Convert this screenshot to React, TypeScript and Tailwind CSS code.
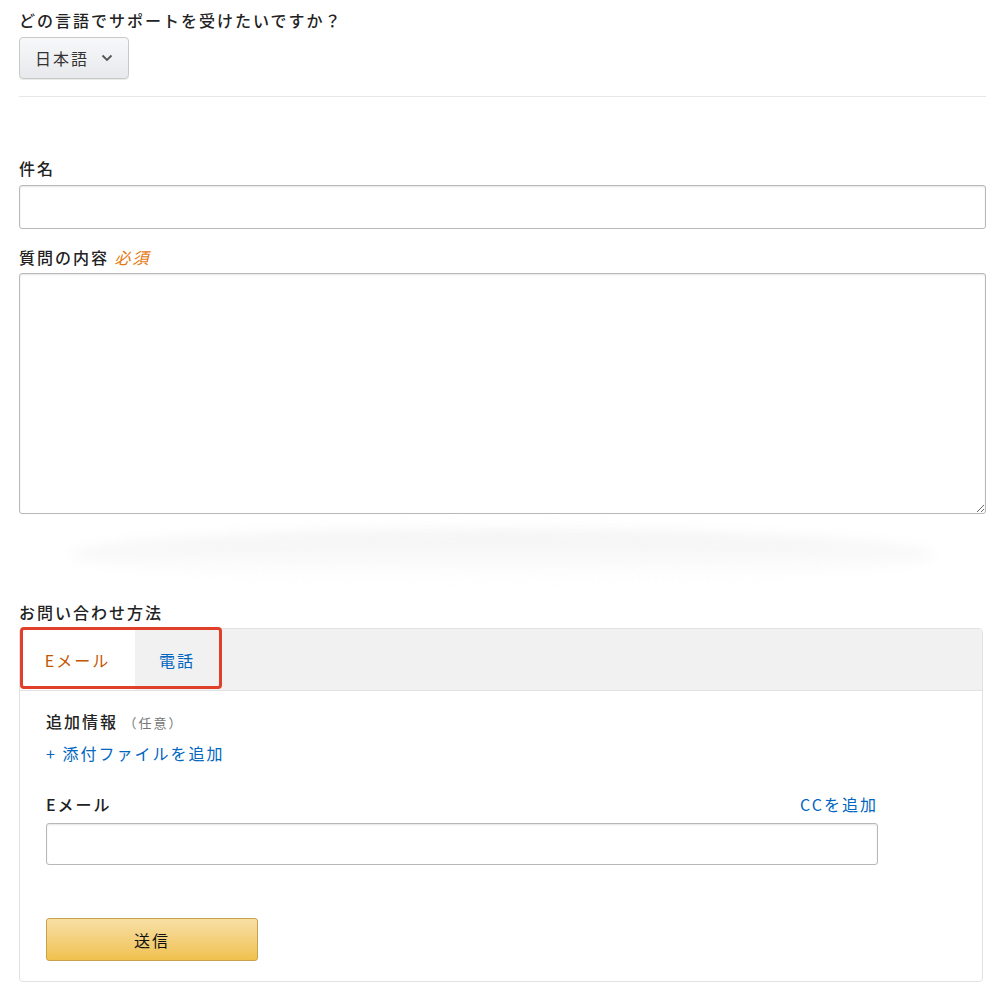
import { useState } from 'react'

const font = { fontFamily: '"Noto Sans CJK JP", "Liberation Sans", sans-serif' }

export default function App() {
  const [tab, setTab] = useState<'email' | 'phone'>('email')

  return (
    <div className="min-h-[991px] bg-white text-[#111] text-[16px] tracking-[2px]" style={font}>
      <div className="pl-[19px] pr-[14px] pt-[9px]">
        <p className="leading-[22px] font-medium text-[#222]">どの言語でサポートを受けたいですか？</p>
        <button className="mt-[6px] flex h-[42px] w-[110px] items-center justify-center gap-3 rounded-[4px] border border-[#c9c9c9] bg-gradient-to-b from-[#f7f8fa] to-[#e7e9ec] text-[#333] shadow-[0_1px_0_rgba(0,0,0,0.08)]">
          <span>日本語</span>
          <svg width="12" height="8" viewBox="0 0 12 8" fill="none" stroke="#555" strokeWidth="1.8">
            <path d="M1.5 1.5 6 6l4.5-4.5" />
          </svg>
        </button>
        <div className="mt-[17px] h-px bg-[#e7e7e7]" />

        <label className="mt-[60px] block leading-[22px] font-medium text-[#222]">件名</label>
        <input className="mt-[6px] block h-[44px] w-full rounded-[3px] border border-[#b8b8b8] shadow-[inset_0_1px_2px_rgba(0,0,0,0.1)] outline-none" />

        <label className="mt-[17px] block leading-[22px] font-medium text-[#222]">
          質問の内容 <span className="italic font-normal text-[#e47911]">必須</span>
        </label>
        <textarea className="mt-[5px] block h-[241px] w-full rounded-[3px] border border-[#b8b8b8] shadow-[inset_0_1px_2px_rgba(0,0,0,0.1)] outline-none" />

        <div className="mx-[50px] mt-[15px] h-[52px] rounded-[50%] bg-gradient-to-b from-[#efefef] to-white opacity-70 blur-[6px]" />

        <p className="mt-[20px] leading-[22px] font-medium text-[#222]">お問い合わせ方法</p>
        <div className="mt-[5px] mr-[3px] rounded-[4px] border border-[#e2e2e2]">
          <div className="relative flex h-[62px] border-b border-[#e2e2e2] bg-[#f1f1f1]">
            <button
              onClick={() => setTab('email')}
              className={`w-[115px] ${tab === 'email' ? 'bg-white text-[#c45500]' : 'text-[#0066c0]'}`}
            >
              Eメール
            </button>
            <button
              onClick={() => setTab('phone')}
              className={`w-[84px] ${tab === 'phone' ? 'bg-white text-[#c45500]' : 'text-[#0066c0]'}`}
            >
              電話
            </button>
            <div className="pointer-events-none absolute left-[0px] top-[-2px] h-[62px] w-[202px] rounded-[4px] border-[3px] border-[#e0402a]" />
          </div>
          <div className="px-[26px] pb-[20px] pt-[19px]">
            <p className="leading-[22px] font-medium text-[#222]">
              追加情報 <span className="text-[13px] font-normal text-[#777]">（任意）</span>
            </p>
            <a className="mt-[8px] block leading-[22px] text-[#0066c0]">+ 添付ファイルを追加</a>
            <div className="mt-[29px] flex w-[832px] items-end justify-between">
              <label className="leading-[22px] font-medium text-[#222]">Eメール</label>
              <a className="leading-[22px] text-[#0066c0]">CCを追加</a>
            </div>
            <input className="mt-[8px] block h-[42px] w-[832px] rounded-[3px] border border-[#b8b8b8] shadow-[inset_0_1px_2px_rgba(0,0,0,0.1)] outline-none" />
            <button className="mt-[53px] block h-[43px] w-[212px] rounded-[3px] border border-[#c8a24a] bg-gradient-to-b from-[#f7dfa5] to-[#f0c14b] text-[#111]">
              送信
            </button>
          </div>
        </div>
      </div>
    </div>
  )
}
